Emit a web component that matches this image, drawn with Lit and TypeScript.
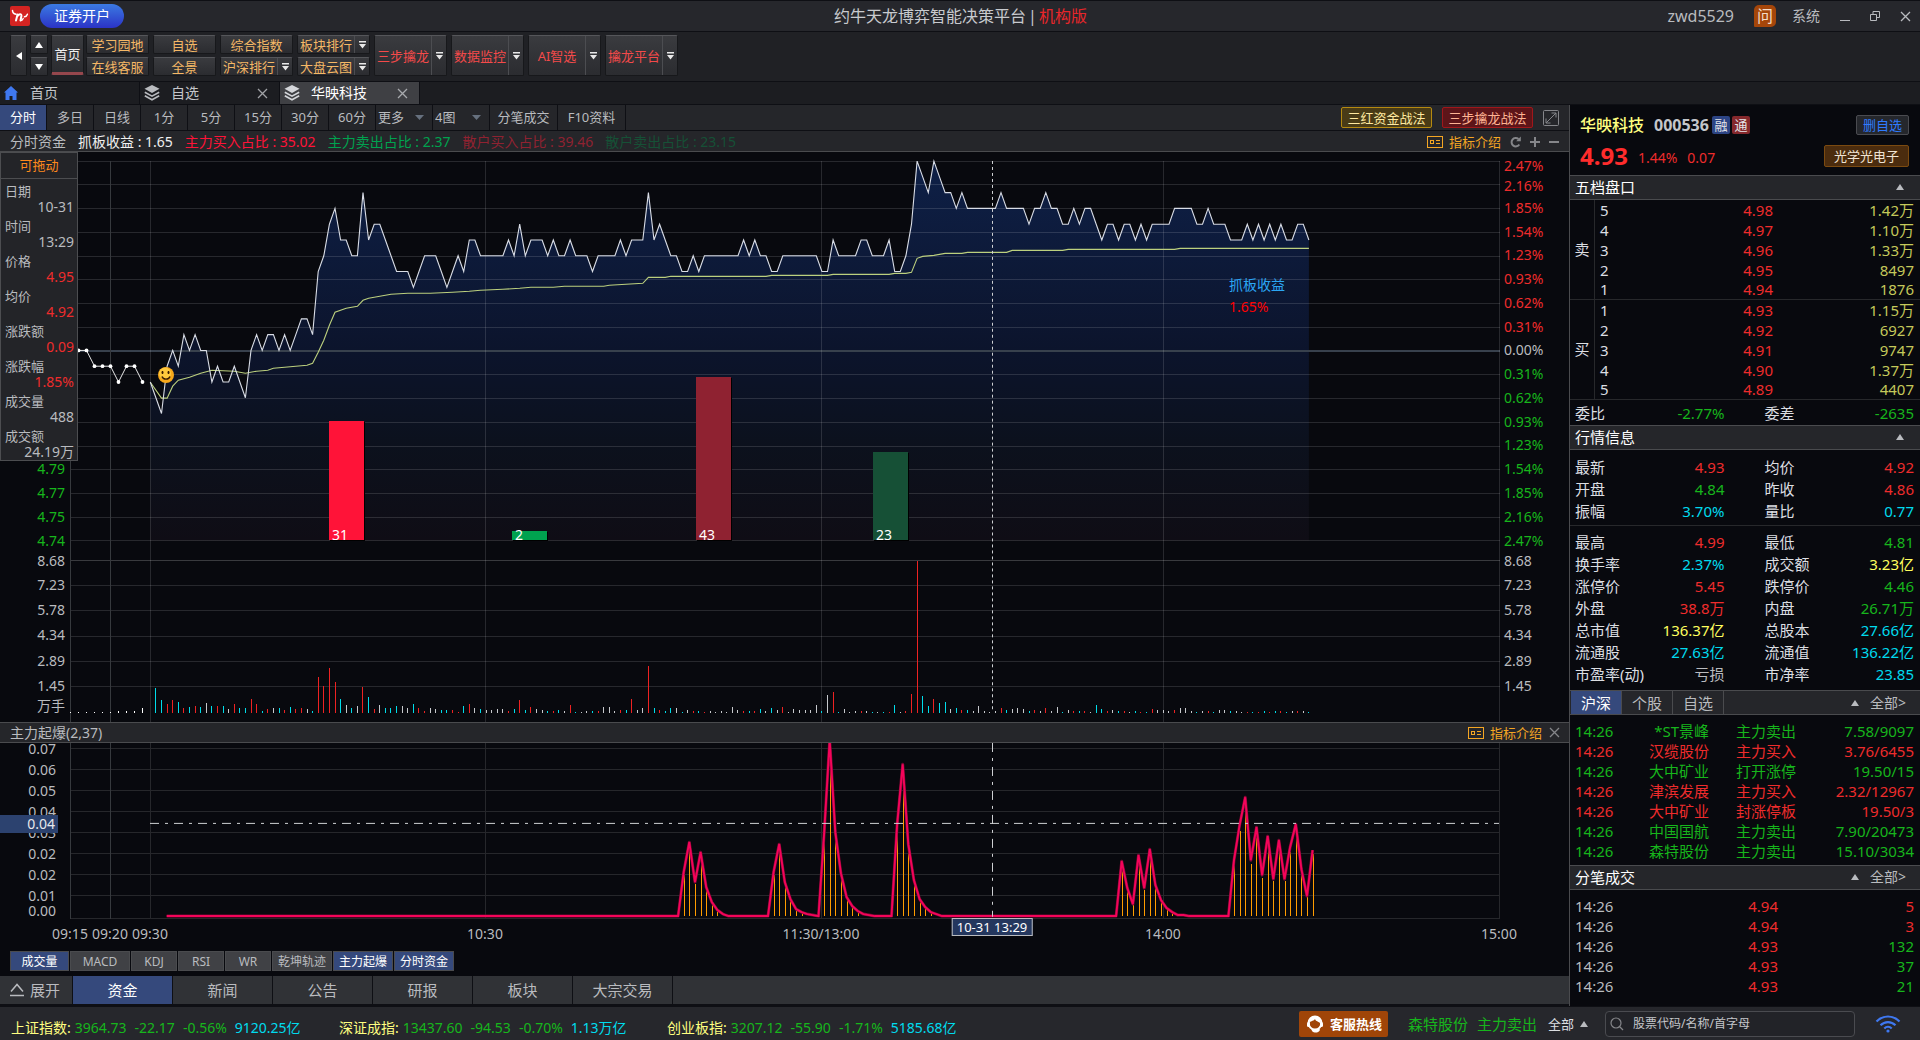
import { LitElement, html, svg, css } from "lit";
import { customElement } from "lit/decorators.js";
import { classMap } from "lit/directives/class-map.js";

/* ---------- shared ---------- */

const base = css`
  * { box-sizing: border-box; }
  button, select, input {
    font: inherit; color: inherit; background: none; border: 0; margin: 0; padding: 0; border-radius: 0;
  }
  button { cursor: pointer; white-space: nowrap; }
  a { color: inherit; text-decoration: none; }
  svg { display: block; flex: none; }
  table { border-collapse: separate; border-spacing: 0; width: 100%; table-layout: fixed; }
  td, th { padding: 0; font-weight: 400; white-space: nowrap; }
  .red { color: #ee2c2c; }
  .green { color: #17b51c; }
  .cyan { color: #00dbee; }
  .yellow { color: #ffff5e; }
  .gray { color: #b9bbbf; }
`;

const guideIcon = () => html`<svg width="16" height="12" viewBox="0 0 16 12" fill="none" stroke="#f5a623" shape-rendering="crispEdges">
  <rect x="0.5" y="0.5" width="15" height="11"/><rect x="3.5" y="4.5" width="3" height="3"/><path d="M9 4.5h4M9 7.5h4"/></svg>`;
const closeIcon = (c: string, s = 11) => html`<svg width=${s} height=${s} viewBox="0 0 11 11" fill="none" stroke=${c} stroke-width="1.3"><path d="M1 1l9 9M10 1l-9 9"/></svg>`;
const triUp = () => html`<svg width="8" height="6" viewBox="0 0 8 6" fill="#b9bbbf"><path d="M4 0l4 6H0z"/></svg>`;

/* ---------- chart data ---------- */

const X0 = 150.3;
const SLOT = 5.597;
const px = (slot: number) => X0 + slot * SLOT;

/* [minute slot, ticks above the previous close] */
const PRICE = `0:-2 2:-4 3:-1 4:0 5:-1 6:1 7:0 8:1 9:0 10:0 11:-2 12:-1 13:-2 14:-2 15:-1 17:-3 18:0 19:1 20:0 21:1 22:1 23:0
24:1 25:0 26:1 27:2 28:2 29:1 30:5 31:6 32:8 33:9 34:7 35:7 36:6 37:6 38:10 39:7 40:8 41:8 42:7 43:6 44:5 46:5 47:4 48:5 49:6 51:6
52:5 53:4 54:5 55:6 56:5 57:7 58:7 59:6 63:6 64:7 65:6 66:8 67:6 68:7 70:7 71:6 72:7 73:6 74:6 75:7 76:6 78:6 79:5 80:6 83:6 84:7
85:6 86:7 88:7 89:10 90:7 91:8 92:7 93:6 94:6 95:5 96:5 97:6 98:5 99:6 105:6 106:7 107:6 108:7 109:6 110:6 111:5 112:5 113:6 119:6
120:5 121:5 122:7 123:6 126:6 127:7 128:7 129:6 131:6 132:7 133:5 134:5 135:6 136:8 137:12 138:11 139:10 140:12 141:11 142:10
143:10 144:9 145:10 146:9 151:9 152:10 153:9 156:9 157:8 158:9 159:9 160:10 161:9 162:9 163:8 164:8 165:9 166:8 167:9 168:9 169:8
170:7 171:8 172:8 173:7 174:8 175:8 176:7 177:8 178:7 179:8 182:8 183:9 186:9 187:8 188:8 189:9 190:8 192:8 193:7 195:7 196:8
197:7 198:8 199:7 200:8 201:7 202:8 203:7 204:7 205:8 206:8 207:7`.split(/\s+/).map((p) => p.split(":").map(Number));

const AVERAGE = `0:382 2:398 3:398 4:386 5:380 7:377 9:373 11:370 15:371 17:373 19:371 21:370 22:368 24:367 26:366 28:365 29:363
30:352 31:340 32:325 33:312 35:308 37:306 38:300 39:298 41:296 43:294 46:293 50:293 54:292 57:291 59:290 63:289 66:288 68:287 72:287
74:286 81:286 82:285 85:284 88:283 89:277 92:277 93:276 110:276 111:275 121:275 122:274 132:274 133:273 135:273 136:272 137:258
138:256 140:255 142:253 145:253 146:252 153:252 154:250 163:250 164:249 183:249 184:248 207:248`.split(/\s+/).map((p) => p.split(":").map(Number));

/* per-minute volume: bar height and tone */
const VOLUME = `25C 13C 9R 13R 11C 5R 6C 7R 6C 10W 7C 7R 7C 4W 9R 5C 5C 14R 9R 2C 4R 5W 5C 3R 6C 4R 5R 4W 2C 36R 27R 45R 31R 14C 8W 5C
7W 26R 16C 4R 8W 5C 5C 7C 7W 5W 9C 5R 2R 5W 4W 3C 3C 3R 1R 7C 9R 5W 4C 3W 3W 4W 4W 2R 4C 13R 3C 6R 4W 3W 2C 2R 3C 2W 8R 1C 1W 2W 2C
2R 6W 6W 2W 3R 3C 14R 3W 5W 47R 5C 3R 2C 5C 5W 1C 3W 2R 2C 1R 2W 1W 2W 1W 6W 3W 2R 2C 2R 4C 2W 5C 3W 6R 1W 4W 3W 3W 3W 8W 2C 18W 21R
1C 4W 1W 2W 2R 2W 1C 1W 1C 1R 8C 1W 2R 19R 152R 17C 7C 14R 10C 11C 4W 5C 3R 3C 2W 7W 2W 1W 2W 5R 3C 4W 5W 4W 2C 3R 2W 5R 2W 6W 1C 3W
2R 2C 2R 1W 8C 4C 2R 3W 2C 2R 1W 2C 1R 1C 4R 3W 3W 2W 3R 5W 5W 2W 1C 2W 2R 1C 3W 3W 2C 2W 1W 1R 1C 1R 2C 1R 2C 2R 1C 2W 2R 2W 1C`.split(/\s+/);
const TONE: Record<string, string> = { R: "#ee2222", C: "#00dcea", W: "#c6c8cc" };

const BURST: [number, number[]][] = [
  [94, [0, 44, 74, 34, 64, 29, 14, 6, 2, 0]],
  [110, [0, 44, 72, 34, 17, 7, 4, 2, 1]],
  [119, [0, 82, 176, 84, 43, 19, 10, 5, 2, 1, 0]],
  [132, [0, 91, 152, 72, 36, 17, 9, 4, 2, 0]],
  [172, [0, 55, 28, 12, 61, 28, 67, 31, 16, 8, 4, 1, 1, 0]],
  [192, [0, 56, 91, 119, 56, 89, 41, 80, 37, 76, 37, 69, 92, 47, 20, 66]],
];

const H_LINES = [161, 184, 208, 232, 256, 279, 303, 327, 374, 398, 422, 446, 469, 493, 517, 541, 561, 586, 611, 637, 662, 687];
const SUB_LINES = [749, 770, 791, 812, 833, 854, 875, 896, 919];
const V_LINES = [150, 485, 821, 1163, 1499];

const PCT = ["2.47%", "2.16%", "1.85%", "1.54%", "1.23%", "0.93%", "0.62%", "0.31%", "0.00%", "0.31%", "0.62%", "0.93%", "1.23%", "1.54%", "1.85%", "2.16%", "2.47%"];
/* the cursor box stands in front of the upper thirteen levels */
const PRICES = [...Array(13).fill(""), "4.79", "4.77", "4.75", "4.74"];
const VOLS = ["8.68", "7.23", "5.78", "4.34", "2.89", "1.45"];
const SUBS = ["0.07", "0.06", "0.05", "0.04", "0.03", "0.02", "0.02", "0.01"];
const TIMES: [string, number][] = [["09:15", 70], ["09:20", 110], ["09:30", 150], ["10:30", 485], ["11:30/13:00", 821], ["14:00", 1163], ["15:00", 1499]];
const FUNDS: [string, number, number, string][] = [["31", 329, 421, "#ff1338"], ["2", 512, 532, "#00a24f"], ["43", 696, 377, "#8f2231"], ["23", 873, 452, "#165036"]];
const CURSOR: [string, string, string][] = [
  ["日期", "10-31", "gray"], ["时间", "13:29", "gray"], ["价格", "4.95", "red"], ["均价", "4.92", "red"],
  ["涨跌额", "0.09", "red"], ["涨跌幅", "1.85%", "red"], ["成交量", "488", "gray"], ["成交额", "24.19万", "gray"],
];

const leftPct = (x: number) => `left:${((x - 70) / 1430) * 100}%`;
const spot = (x: number, y: number) => `${leftPct(x)};top:${((y - 152) / 571) * 100}%`;

@customElement("market-chart")
export class MarketChart extends LitElement {
  static styles = [base, css`
    :host { flex: 1; display: flex; flex-direction: column; min-height: 0; font-size: 14px; line-height: 18px; }
    .panel { display: grid; grid-template-columns: 70px minmax(0, 1fr) 69px; grid-template-rows: minmax(0, 1fr); min-height: 0; position: relative; }
    .main { flex: 571 1 0; }
    .sub { flex: 176 1 0; }
    .plot { position: relative; min-height: 0; min-width: 0; }
    .plot svg.canvas { width: 100%; height: 100%; position: absolute; inset: 0; }
    .axis { display: grid; grid-template-rows: 4fr 20fr 20fr minmax(0, 357fr) 18fr 2fr minmax(0, 126fr) 16fr 8fr; min-height: 0; }
    .axis span { display: flex; align-items: center; min-height: 0; line-height: 16px; }
    .l span { justify-content: flex-end; padding-right: 5px; }
    .r span { padding-left: 4px; }
    .even { display: grid; grid-auto-rows: minmax(0, 1fr); min-height: 0; }
    .subaxis { display: grid; grid-template-rows: minmax(0, 163fr) minmax(0, 9fr) minmax(0, 4fr); color: #b9bbbf; position: relative; min-height: 0; }
    .subaxis .even { margin-top: -5px; }
    .subaxis span { display: flex; align-items: center; justify-content: flex-end; padding-right: 14px; line-height: 16px; min-height: 0; }
    .mark { position: absolute; left: 0; top: 41%; width: 58px; height: 18px; line-height: 18px; background: #2c426f; color: #e6e8ec; text-align: right; padding-right: 3px; }
    .tag { position: absolute; white-space: nowrap; color: #fff; line-height: 14px; }
    .gain { position: absolute; line-height: 22px; color: #2ba6f4; }
    .gain b { display: block; font-weight: 400; color: #ff0000; }
    .face { position: absolute; }
    .cursor { position: absolute; left: 0; top: 0; width: 78px; border: 1px solid #4c4d50; background: #232428; color: #b9bbbf; font-size: 14px; margin: 0; z-index: 2; padding-bottom: 1px; }
    .cursor h3 { margin: 0; font-weight: 400; font-size: 13px; line-height: 25px; text-align: center; color: #ff8a1c; border-bottom: 1px solid #4c4d50; }
    .cursor dl { margin: 0; padding: 5px 3px 0 4px; display: grid; gap: 5px; }
    .cursor dt, .cursor dd { margin: 0; line-height: 15px; }
    .cursor dt { font-size: 13px; }
    .cursor dd { text-align: right; }
    .bar { flex: none; height: 21px; display: flex; align-items: center; gap: 7px; padding: 0 9px 0 10px; background: #25262a; border-top: 1px solid #4a4b4e; border-bottom: 1px solid #4a4b4e; color: #b9bbbf; }
    .bar .guide { margin-left: auto; display: flex; align-items: center; gap: 6px; color: #f5a623; font-size: 13px; }
    .times { flex: none; height: 32px; display: grid; grid-template-columns: 70px minmax(0, 1fr) 69px; color: #b9bbbf; }
    .times div { grid-column: 2; position: relative; }
    .times span { position: absolute; top: 6px; transform: translateX(-50%); white-space: nowrap; }
    .times .now { top: -1px; border: 1px solid #b9bbbf; background: #24375e; color: #fff; padding: 0 4px; line-height: 16px; font-size: 13px; }
  `];

  private mainPlot() {
    const y = (k: number) => 350.7 - k * 15.8;
    const line = PRICE.map(([s, k]) => `${px(s).toFixed(1)},${y(k).toFixed(1)}`).join(" ");
    const avg = AVERAGE.map(([s, v]) => `${px(s).toFixed(1)},${v + 0.5}`).join(" ");
    const pre = [[70, -1], [78.5, 0], [86.5, 0], [94.5, -1], [102.5, -1], [110.5, -1], [118.5, -2], [126.5, -1], [134.5, -1], [142.5, -2]];
    const preVol = [1, 1, 1, 1, 1, 1, 2, 2, 2, 5];
    return svg`<svg class="canvas" viewBox="70 152 1430 571" preserveAspectRatio="none">
      <defs><linearGradient id="fill" gradientUnits="userSpaceOnUse" x1="0" y1="161" x2="0" y2="541">
        <stop offset="0" stop-color="#0e2047"/><stop offset="0.5" stop-color="#0c142c"/><stop offset="0.75" stop-color="#0c111d"/><stop offset="1" stop-color="#0f0d15"/></linearGradient></defs>
      <polygon points="${X0},541 ${line} ${px(207)},541" fill="url(#fill)"/>
      <g shape-rendering="crispEdges">
        ${H_LINES.map((v) => svg`<rect x="70" y=${v} width="1430" height="1" fill="#fff" fill-opacity=${v === 561 ? 0.2 : 0.13}/>`)}
        <rect x="70" y="350" width="1430" height="2" fill="#38414d"/>
        ${V_LINES.map((v) => svg`<rect x=${v} y="161" width="1" height="562" fill="#fff" fill-opacity="0.13"/>`)}
        <rect x="70" y="161" width="1" height="562" fill="#36393d"/>
        <rect x="110" y="161" width="1" height="562" fill="#36393d"/>
        ${preVol.map((h, i) => svg`<rect x=${70 + i * 8} y=${714 - h} width="1" height=${h} fill="#fff"/>`)}
        ${VOLUME.map((v, i) => {
          const h = parseInt(v, 10);
          return svg`<rect x=${Math.floor(px(i + 1))} y=${714 - h} width="1" height=${h} fill=${TONE[v.slice(-1)]}/>`;
        })}
      </g>
      <polyline points=${avg} fill="none" stroke="#bcd07e" stroke-width="1.1"/>
      <polyline points=${line} fill="none" stroke="#d9dde6" stroke-width="1.1"/>
      <polyline points=${pre.map(([x, k]) => `${x},${y(k)}`).join(" ")} fill="none" stroke="#e8e8e8"/>
      ${pre.map(([x, k]) => svg`<circle cx=${x} cy=${y(k)} r="1.9" fill="#fff"/>`)}
      <g shape-rendering="crispEdges">
        ${FUNDS.map(([, x, top, c]) => svg`<rect x=${x + 1} y=${top + 1} width="35" height=${541 - top} fill="#000"/><rect x=${x} y=${top} width="35" height=${541 - top} fill=${c}/>`)}
        <path d="M992.5 161V711" stroke="#cfd1d4" stroke-dasharray="3 3" fill="none"/>
      </g>
    </svg>`;
  }

  private subPlot() {
    const x = (j: number) => X0 + j * 5.615;
    const pts: string[] = ["166.7,917.3"];
    const sticks: [number, number][] = [];
    for (const [start, vals] of BURST) {
      vals.forEach((v, i) => {
        pts.push(`${x(start + i).toFixed(1)},${917.3 - v}`);
        if (v > 2) sticks.push([x(start + i), v]);
      });
    }
    return svg`<svg class="canvas" viewBox="70 744 1430 176" preserveAspectRatio="none">
      <g shape-rendering="crispEdges">
        ${SUB_LINES.map((v) => svg`<rect x="70" y=${v} width="1430" height="1" fill="#26272b"/>`)}
        ${V_LINES.map((v) => svg`<rect x=${v} y="744" width="1" height="176" fill="#26272b"/>`)}
        <rect x="70" y="744" width="1" height="176" fill="#36393d"/><rect x="110" y="744" width="1" height="176" fill="#36393d"/>
        ${sticks.map(([sx, v]) => svg`<rect x=${Math.round(sx)} y=${917 - v * 0.93} width="1" height=${v * 0.93} fill="#ff9c00"/>`)}
      </g>
      <polyline points=${pts.join(" ")} fill="none" stroke="#7d0833" stroke-width="3" stroke-linejoin="round"/>
      <polyline points=${pts.join(" ")} fill="none" stroke="#f4045a" stroke-width="1.9" stroke-linejoin="miter"/>
      <g shape-rendering="crispEdges" stroke="#cfd1d4" stroke-dasharray="9 6 3 6" fill="none">
        <path d="M992.5 744V918"/><path d="M150 824.5H1499"/>
      </g>
    </svg>`;
  }

  private axis(side: string, labels: string[]) {
    const tone = (i: number) => (i < 8 ? "red" : i === 8 ? "gray" : "green");
    return html`<div class="axis ${side}">
      <i></i><span class="red">${labels[0]}</span><span class="red">${labels[1]}</span>
      <div class="even">${labels.slice(2).map((t, i) => html`<span class=${tone(i + 2)}>${t}</span>`)}</div>
      <span class="gray">${VOLS[0]}</span><i></i>
      <div class="even">${VOLS.slice(1).map((t) => html`<span class="gray">${t}</span>`)}</div>
      ${side === "l" ? html`<span class="gray">万手</span>` : ""}
    </div>`;
  }

  render() {
    return html`
      <section class="panel main">
        ${this.axis("l", PRICES)}
        <div class="plot">
          ${this.mainPlot()}
          ${FUNDS.map(([t, x]) => html`<span class="tag" style=${spot(x + 3, 529)}>${t}</span>`)}
          <div class="gain" style=${spot(1229, 274)}>抓板收益<b>1.65%</b></div>
          <svg class="face" style=${spot(158, 367)} width="16" height="16" viewBox="0 0 16 16">
            <circle cx="8" cy="8" r="8" fill="#f7a81b"/><circle cx="7" cy="6.5" r="6" fill="#ffc93d"/>
            <path d="M4.5 4v3M3.5 5.500h2M10.500 4v3M9.500 5.500h2" stroke="#3a1c00" stroke-width="1.300" fill="none"/>
            <path d="M4 9.500c1 3.500 7 3.500 8 0" stroke="#3a1c00" stroke-width="1.400" fill="none"/></svg>
        </div>
        ${this.axis("r", PCT)}
        <aside class="cursor"><h3>可拖动</h3>
          <dl>${CURSOR.map(([k, v, c]) => html`<div><dt>${k}</dt><dd class=${c}>${v}</dd></div>`)}</dl>
        </aside>
      </section>
      <div class="bar">主力起爆(2,37)<a class="guide" href="#">${guideIcon()}指标介绍</a><button aria-label="关闭">${closeIcon("#85868a")}</button></div>
      <section class="panel sub">
        <div class="subaxis">
          <div class="even">${SUBS.map((t) => html`<span>${t}</span>`)}</div><span>0.00</span>
          <div class="mark">0.04</div>
        </div>
        <div class="plot">${this.subPlot()}</div>
      </section>
      <div class="times"><div>
        ${TIMES.map(([t, x]) => html`<span style=${leftPct(x)}>${t}</span>`)}
        <span class="now" style=${leftPct(992)}>10-31 13:29</span>
      </div></div>`;
  }
}

/* ---------- quote panel ---------- */

const SELL = [["5", "4.98", "1.42万"], ["4", "4.97", "1.10万"], ["3", "4.96", "1.33万"], ["2", "4.95", "8497"], ["1", "4.94", "1876"]];
const BUY = [["1", "4.93", "1.15万"], ["2", "4.92", "6927"], ["3", "4.91", "9747"], ["4", "4.90", "1.37万"], ["5", "4.89", "4407"]];
const INFO_A = [["最新", "4.93", "red"], ["均价", "4.92", "red"], ["开盘", "4.84", "green"], ["昨收", "4.86", "red"], ["振幅", "3.70%", "cyan"], ["量比", "0.77", "cyan"]];
const INFO_B = [
  ["最高", "4.99", "red"], ["最低", "4.81", "green"], ["换手率", "2.37%", "cyan"], ["成交额", "3.23亿", "yellow"],
  ["涨停价", "5.45", "red"], ["跌停价", "4.46", "green"], ["外盘", "38.8万", "red"], ["内盘", "26.71万", "green"],
  ["总市值", "136.37亿", "yellow"], ["总股本", "27.66亿", "cyan"], ["流通股", "27.63亿", "cyan"], ["流通值", "136.22亿", "cyan"],
  ["市盈率(动)", "亏损", "gray"], ["市净率", "23.85", "cyan"],
];
const FEED = [
  ["*ST景峰", "主力卖出", "7.58/9097", "green"], ["汉缆股份", "主力买入", "3.76/6455", "red"], ["大中矿业", "打开涨停", "19.50/15", "green"],
  ["津滨发展", "主力买入", "2.32/12967", "red"], ["大中矿业", "封涨停板", "19.50/3", "red"], ["中国国航", "主力卖出", "7.90/20473", "green"],
  ["森特股份", "主力卖出", "15.10/3034", "green"],
];
const TICKS = [["4.94", "5", "red"], ["4.94", "3", "red"], ["4.93", "132", "green"], ["4.93", "37", "green"], ["4.93", "21", "green"]];

@customElement("quote-panel")
export class QuotePanel extends LitElement {
  static styles = [base, css`
    :host { display: block; width: 351px; flex: none; border-left: 1px solid #4a4b4e; font-size: 15px; line-height: 20px; color: #dcdee2; background: #08090e; }
    .head { height: 70px; padding: 10px 11px 0 10px; }
    .line { display: flex; align-items: center; }
    .name { font-size: 16px; font-weight: 500; color: #ffff80; margin: 0 10px 0 0; }
    .code { font-size: 16px; font-weight: 700; color: #c4c6ca; margin-right: 3px; }
    .badge { width: 18px; height: 18px; line-height: 18px; font-size: 13px; text-align: center; border-radius: 2px; background: #2c4484; margin-right: 2px; color: #e4e6ea; }
    .badge.pass { background: #85282c; }
    .del { margin-left: auto; width: 53px; height: 20px; line-height: 18px; border: 1px solid #4a4b50; border-radius: 2px; background: #25272c; color: #2f7bff; font-size: 13px; }
    .second { margin-top: 9px; }
    .last { font-size: 24px; line-height: 24px; font-weight: 700; margin-right: 10px; color: #ff2c2c; }
    .chg { font-size: 14px; margin-right: 10px; padding-top: 4px; }
    .sector { margin-left: auto; width: 85px; height: 22px; line-height: 20px; border: 1px solid #7b4a10; border-radius: 2px; background: #4b2c0e; color: #f0e4d4; font-size: 13px; }
    .title { height: 25px; display: flex; align-items: center; margin: 0; padding: 0 14px 2px 5px; background: #25262a; border-top: 1px solid #4a4b4e; border-bottom: 1px solid #4a4b4e; font-size: 15px; font-weight: 400; color: #fff; }
    .title .fold { margin-left: auto; margin-right: 2px; }
    .title .all { margin-left: 9px; color: #b9bbbf; font-size: 14px; }
    .book tr { height: 20px; line-height: 19px; }
    .book tr:last-child td, .book .side { border-bottom: 1px solid #27282b; }
    .book .side { width: 25px; border-right: 1px solid #27282b; text-align: center; }
    .book .lv { width: 40px; padding-left: 5px; text-align: left; }
    .book .pr { text-align: right; }
    .book .vo { width: 147px; text-align: right; padding-right: 6px; color: #c4c85a; }
    .diff { height: 25px; align-content: center; }
    dl { margin: 0; display: grid; grid-template-columns: 1fr 1fr; column-gap: 40px; padding: 0 6px 0 5px; }
    dl div { display: flex; justify-content: space-between; line-height: 22px; white-space: nowrap; }
    dt, dd { margin: 0; height: 22px; }
    .a { padding-top: 6px; padding-bottom: 3px; border-bottom: 1px solid #27282b; }
    .b { padding-top: 5px; padding-bottom: 5px; }
    .tabs { padding: 0 14px 0 1px; }
    .tabs .tab { width: 51px; height: 23px; border-right: 1px solid #4a4b4e; color: #b9bbbf; }
    .tabs .on { background: #35497c; color: #fff; }
    .feed { margin: 6px 0 4px; }
    .feed tr, .ticks tr { height: 20px; line-height: 19px; }
    .feed .t, .ticks .t { width: 60px; padding-left: 5px; text-align: left; }
    .feed .n { width: 79px; text-align: right; }
    .feed .k { width: 90px; padding-left: 27px; text-align: left; }
    .feed .p, .ticks .q { text-align: right; padding-right: 6px; }
    .ticks { margin-top: 6px; }
    .ticks .p { width: 148px; text-align: right; }
  `];

  private side(name: string, rows: string[][]) {
    return html`<tbody>${rows.map((r, i) => html`<tr>
      ${i === 0 ? html`<th class="side" rowspan="5">${name}</th>` : ""}
      <td class="lv">${r[0]}</td><td class="pr red">${r[1]}</td><td class="vo">${r[2]}</td></tr>`)}</tbody>`;
  }
  private pairs(cls: string, rows: string[][]) {
    return html`<dl class=${cls}>${rows.map(([k, v, c]) => html`<div><dt>${k}</dt><dd class=${c}>${v}</dd></div>`)}</dl>`;
  }

  render() {
    return html`
      <header class="head">
        <div class="line"><h1 class="name">华映科技</h1><span class="code">000536</span><span class="badge">融</span><span class="badge pass">通</span><button class="del">删自选</button></div>
        <div class="line second"><span class="last">4.93</span><span class="chg red">1.44%</span><span class="chg red">0.07</span><button class="sector">光学光电子</button></div>
      </header>
      <h2 class="title">五档盘口<button class="fold" aria-label="收起">${triUp()}</button></h2>
      <table class="book">${this.side("卖", SELL)}${this.side("买", BUY)}</table>
      ${this.pairs("diff", [["委比", "-2.77%", "green"], ["委差", "-2635", "green"]])}
      <h2 class="title">行情信息<button class="fold" aria-label="收起">${triUp()}</button></h2>
      ${this.pairs("a", INFO_A)}${this.pairs("b", INFO_B)}
      <div class="title tabs"><button class="tab on">沪深</button><button class="tab">个股</button><button class="tab">自选</button>
        <button class="fold" aria-label="收起">${triUp()}</button><a class="all" href="#">全部&gt;</a></div>
      <table class="feed"><tbody>${FEED.map(([n, k, p, c]) => html`<tr class=${c}><td class="t">14:26</td><td class="n">${n}</td><td class="k">${k}</td><td class="p">${p}</td></tr>`)}</tbody></table>
      <h2 class="title">分笔成交<button class="fold" aria-label="收起">${triUp()}</button><a class="all" href="#">全部&gt;</a></h2>
      <table class="ticks"><tbody>${TICKS.map(([p, q, c]) => html`<tr><td class="t gray">14:26</td><td class="p red">${p}</td><td class="q ${c}">${q}</td></tr>`)}</tbody></table>`;
  }
}

/* ---------- shell ---------- */

const PERIODS = ["分时", "多日", "日线", "1分", "5分", "15分", "30分", "60分"];
const RATIOS = [["抓板收益 : 1.65", "c0"], ["主力买入占比 : 35.02", "c1"], ["主力卖出占比 : 2.37", "c2"], ["散户买入占比 : 39.46", "c3"], ["散户卖出占比 : 23.15", "c4"]];
const INDICATORS = ["成交量", "MACD", "KDJ", "RSI", "WR", "乾坤轨迹", "主力起爆", "分时资金"];
const SECTIONS = ["资金", "新闻", "公告", "研报", "板块", "大宗交易"];
const INDEXES = [
  ["上证指数:", "3964.73", "-22.17", "-0.56%", "9120.25亿"],
  ["深证成指:", "13437.60", "-94.53", "-0.70%", "1.13万亿"],
  ["创业板指:", "3207.12", "-55.90", "-1.71%", "5185.68亿"],
];

const dropMark = () => html`<svg width="7" height="8" viewBox="0 0 7 8" fill="#e8e8e8"><path d="M0 0h7v1.500H0zM0 3h7L3.500 7.500z"/></svg>`;
const stack = (c: string) => html`<svg width="16" height="16" viewBox="0 0 16 16"><path fill=${c} d="M8 0l7.500 3.800L8 8 .5 3.800z"/><path fill="none" stroke=${c} stroke-width="1.600" d="M.8 7.300L8 11.200l7.200-3.900M.8 10.800L8 14.800l7.200-4"/></svg>`;

@customElement("app-root")
export class AppRoot extends LitElement {
  static styles = [base, css`
    :host { display: flex; flex-direction: column; min-height: 100vh; background: #08090e; color: #b9bbbf; font: 14px/20px "Noto Sans", "Noto Sans CJK SC", sans-serif; }
    .top { height: 32px; display: grid; grid-template-columns: 1fr auto 1fr; align-items: center; padding: 0 9px 0 10px; background: #26272c; border-top: 1px solid #0e0f14; border-bottom: 1px solid #0e0f14; }
    .brand, .user { display: flex; align-items: center; }
    .open { margin-left: 10px; width: 84px; height: 24px; border-radius: 12px; background: linear-gradient(#3b7ae2, #2b33c6); color: #fff; line-height: 22px; }
    .product { font-size: 16px; margin: 0; font-weight: 400; color: #c8cace; display: flex; gap: 2px; }
    .product b { font-weight: 400; color: #e8262a; }
    .user { justify-content: flex-end; font-size: 16px; }
    .ask { width: 22px; height: 22px; line-height: 21px; font-size: 16px; border-radius: 5px 5px 5px 1px; background: #a5460a; color: #f4dcc8; margin: 0 16px 0 20px; text-align: center; }
    .sys { font-size: 14px; margin-right: 20px; }
    .win { margin-left: 20px; }

    .tools { height: 50px; display: flex; gap: 4px; padding: 3px 10px 5px; background: #202125; border-bottom: 1px solid #0e0f14; font-size: 13px; line-height: 16px; }
    .key { background: linear-gradient(#3a3b3f, #2b2c30); border: 1px solid #17181b; border-top-color: #55565a; border-radius: 2px; display: flex; align-items: center; justify-content: center; color: #f5b866; height: 19px; flex: 1; }
    .col { display: flex; flex-direction: column; gap: 3px; width: 73px; }
    .slim { width: 63px; }
    .back { width: 17px; flex: none; height: auto; }
    .nudge { width: 18px; margin-right: -1px; margin-left: -1px; }
    .homekey { width: 33px; flex: none; height: 40px; color: #f0f0f0; border-bottom: 3px solid #95474d; margin-right: -2px; }
    .split { justify-content: flex-start; }
    .split .word { flex: 1; text-align: center; }
    .split .arrow { width: 15px; align-self: stretch; display: flex; align-items: center; justify-content: center; border-left: 1px solid #4c4d51; }
    .big { width: 73px; flex: none; height: auto; color: #f44a4a; }

    .tabs { height: 23px; display: flex; background: #1c1d21; border-bottom: 1px solid #0e0f14; color: #c4c6ca; }
    .tab { width: 140px; display: flex; align-items: center; padding: 0 11px 0 4px; border-right: 1px solid #0e0f14; line-height: 22px; }
    .tab .word { margin-left: 12px; flex: 1; text-align: left; }
    .tab .stk { margin-left: 11px; }
    .tab.on { background: #3f4044; color: #fff; }

    .body { flex: 1; display: flex; min-height: 0; }
    .left { flex: 1; min-width: 0; display: flex; flex-direction: column; }
    .periods { flex: none; height: 26px; display: flex; align-items: stretch; background: #25262a; border-bottom: 1px solid #0e0f14; font-size: 13px; }
    .per, .wide { padding-bottom: 2px; }
    .per { width: 47px; border-right: 1px solid #0e0f14; }
    .per.on { background: #35497c; color: #fff; }
    .pick { position: relative; display: flex; align-items: center; width: 57px; border-right: 1px solid #0e0f14; }
    .pick select { appearance: none; width: 100%; padding: 0 0 2px 2px; outline: 0; }
    .pick svg { position: absolute; right: 8px; pointer-events: none; }
    .wide { width: 68px; border-right: 1px solid #0e0f14; }
    .periods .ways { margin-left: auto; display: flex; align-items: center; gap: 10px; padding-right: 10px; }
    .way { width: 91px; height: 21px; line-height: 18px; border: 1px solid #b58a10; border-radius: 2px; background: #493b16; color: #ffe9a0; }
    .way.hot { border-color: #a0171b; background: #5d1519; color: #ffb494; }
    .ratios { flex: none; height: 21px; display: flex; align-items: center; gap: 12px; padding: 1px 10px 0; background: #25262a; border-bottom: 1px solid #4a4b4e; }
    .ratios .c0 { color: #f0f0f0; } .ratios .c1 { color: #ff1338; } .ratios .c2 { color: #00a24f; } .ratios .c3 { color: #8f2231; } .ratios .c4 { color: #165036; }
    .ratios .acts { margin-left: auto; display: flex; align-items: center; gap: 9px; }
    .guide { display: flex; align-items: center; gap: 6px; color: #f5a623; font-size: 13px; }

    .inds { flex: none; height: 25px; display: flex; gap: 1px; padding: 0 10px 5px; font-size: 12px; }
    .inds button { width: 60px; background: #404145; border: 1px solid #4a4b4e; height: 20px; line-height: 17px; }
    .inds button.s { width: 46px; }
    .inds button.m { width: 59px; }
    .inds button.on { background: #35497c; color: #fff; }
    .sects { flex: none; height: 30px; display: flex; background: #303236; border-bottom: 2px solid #0e0f14; font-size: 15px; }
    .sects button { width: 100px; border-right: 1px solid #0e0f14; }
    .sects .grow { width: 73px; display: flex; align-items: center; justify-content: center; gap: 6px; padding-right: 2px; }
    .sects button.on { background: #35497c; color: #fff; }

    .status { flex: none; height: 34px; display: flex; align-items: center; padding: 0 19px 0 11px; background: #26272c; border-top: 1px solid #0e0f14; }
    .idx { display: flex; width: 328px; gap: 8px; white-space: nowrap; padding-top: 8px; }
    .idx .nm { color: #ffff80; margin-right: -4px; }
    .feedback { margin-left: auto; width: 89px; height: 26px; background: #a04508; color: #fff; font-size: 13px; font-weight: 600; display: flex; align-items: center; gap: 6px; padding-left: 7px; border-radius: 2px; margin-right: 20px; }
    .latest { font-size: 15px; color: #17b51c; display: flex; gap: 9px; margin-right: 11px; }
    .more { display: flex; align-items: center; gap: 6px; margin-right: 17px; color: #dcdee2; font-size: 13px; }
    .find { width: 250px; height: 26px; border: 1px solid #4a4b50; border-radius: 4px; display: flex; align-items: center; gap: 9px; padding-left: 4px; margin-right: 20px; background: #222328; }
    .find input { flex: 1; min-width: 0; outline: 0; font-size: 12px; color: #c4c6ca; }
    .find input::placeholder { color: #c4c6ca; opacity: 1; }
  `];

  private split(t: string) {
    return html`<button class="key split"><span class="word">${t}</span><span class="arrow">${dropMark()}</span></button>`;
  }
  private picker(label: string) {
    return html`<label class="pick"><select aria-label=${label}><option>${label}</option></select>
      <svg width="9" height="5" viewBox="0 0 9 5" fill="#66707e"><path d="M0 0h9L4.500 5z"/></svg></label>`;
  }

  render() {
    return html`
      <header class="top">
        <div class="brand">
          <svg width="20" height="20" viewBox="0 0 20 20" fill="none" stroke="#fff" stroke-linecap="round" stroke-linejoin="round"><rect width="20" height="20" rx="2" fill="#d42422" stroke="none"/>
            <path d="M2.500 4.500c0 2.200 1 3.200 3.500 3.800" stroke-width="1.500"/><path d="M7.500 8.500L6 14.500M7.200 10.500c1.500-2.600 4.600-3.200 4.200-.5l-.9 4.500" stroke-width="2"/><path d="M10.500 14.500c1.600.2 2.300-.6 2.800-2.200" stroke-width="1.200"/><path d="M14.500 10.800c1.500-.3 2.400-1 2.900-2.600" stroke-width="1.500"/></svg>
          <button class="open">证券开户</button>
        </div>
        <p class="product"><span>约牛天龙博弈智能决策平台</span><span>|</span><b>机构版</b></p>
        <div class="user"><span>zwd5529</span><button class="ask">问</button><button class="sys">系统</button>
          <button aria-label="最小化"><svg width="10" height="12" viewBox="0 0 10 12"><path d="M0 10.500h10" stroke="#b9bbbf"/></svg></button>
          <button class="win" aria-label="还原"><svg width="10" height="10" viewBox="0 0 10 10" fill="none" stroke="#b9bbbf"><path d="M.5 3.500h6v6h-6zM3 3V.5h6.500v6H7"/></svg></button>
          <button class="win" aria-label="关闭">${closeIcon("#b9bbbf")}</button>
        </div>
      </header>

      <nav class="tools">
        <button class="key back" aria-label="后退"><svg width="6" height="8" viewBox="0 0 6 8" fill="#fff"><path d="M6 0v8L0 4z"/></svg></button>
        <div class="col nudge">
          <button class="key" aria-label="上移"><svg width="8" height="6" viewBox="0 0 8 6" fill="#fff"><path d="M4 0l4 6H0z"/></svg></button>
          <button class="key" aria-label="下移"><svg width="8" height="6" viewBox="0 0 8 6" fill="#fff"><path d="M4 6l4-6H0z"/></svg></button>
        </div>
        <button class="key homekey">首页</button>
        <div class="col slim"><button class="key">学习园地</button><button class="key">在线客服</button></div>
        <div class="col slim"><button class="key">自选</button><button class="key">全景</button></div>
        <div class="col"><button class="key">综合指数</button>${this.split("沪深排行")}</div>
        <div class="col">${this.split("板块排行")}${this.split("大盘云图")}</div>
        ${["三步擒龙", "数据监控", "AI智选", "擒龙平台"].map((t) => html`<button class="key split big"><span class="word">${t}</span><span class="arrow">${dropMark()}</span></button>`)}
      </nav>

      <nav class="tabs">
        <a class="tab" href="#"><svg width="14" height="14" viewBox="0 0 14 14" fill="#3f78f0"><path d="M7 0l7 6.500h-1.500V14H8.500v-4h-3v4h-4V6.500H0z"/></svg><span class="word">首页</span></a>
        <div class="tab">${stack("#b9bbbf")}<span class="word stk">自选</span><button aria-label="关闭">${closeIcon("#a0a2a6")}</button></div>
        <div class="tab on">${stack("#d4d6da")}<span class="word stk">华映科技</span><button aria-label="关闭">${closeIcon("#a8aaae")}</button></div>
      </nav>

      <main class="body">
        <div class="left">
          <div class="periods">
            ${PERIODS.map((t, i) => html`<button class=${classMap({ per: true, on: i === 0 })}>${t}</button>`)}
            ${this.picker("更多")}${this.picker("4图")}
            <button class="wide">分笔成交</button><button class="wide">F10资料</button>
            <div class="ways"><button class="way">三红资金战法</button><button class="way hot">三步擒龙战法</button>
              <button aria-label="全屏"><svg width="16" height="16" viewBox="0 0 16 16" fill="none" stroke="#85868a"><rect x=".5" y=".5" width="15" height="15" rx="1"/><path d="M3 13l10-10M8.500 3H13v4.500M3 8.500V13h4.500"/></svg></button></div>
          </div>
          <div class="ratios"><span>分时资金</span>${RATIOS.map(([t, c]) => html`<span class=${c}>${t}</span>`)}
            <div class="acts"><a class="guide" href="#">${guideIcon()}指标介绍</a>
              <button aria-label="刷新"><svg width="11" height="12" viewBox="0 0 11 12" fill="none" stroke="#85868a" stroke-width="2"><path d="M9.300 8.500A4.200 4.200 0 1 1 8.500 3"/><path d="M10.800.5v4.700H6.200z" fill="#85868a" stroke="none"/></svg></button>
              <button aria-label="放大"><svg width="10" height="10" viewBox="0 0 10 10" stroke="#85868a" stroke-width="2"><path d="M0 5h10M5 0v10"/></svg></button>
              <button aria-label="缩小"><svg width="10" height="10" viewBox="0 0 10 10" stroke="#85868a" stroke-width="2"><path d="M0 5h10"/></svg></button></div>
          </div>
          <market-chart></market-chart>
          <div class="inds">${INDICATORS.map((t, i) => html`<button class=${classMap({ on: i === 0 || i > 5, s: i > 1 && i < 5, m: i === 0 })}>${t}</button>`)}</div>
          <div class="sects"><button class="grow"><svg width="14" height="14" viewBox="0 0 14 14" fill="none" stroke="#b9bbbf" stroke-width="1.500"><path d="M1 8.500l6-7 6 7M0 12.500h14"/></svg>展开</button>
            ${SECTIONS.map((t, i) => html`<button class=${classMap({ on: i === 0 })}>${t}</button>`)}</div>
        </div>
        <quote-panel></quote-panel>
      </main>

      <footer class="status">
        ${INDEXES.map(([n, a, b, c, d]) => html`<div class="idx"><span class="nm">${n}</span><span class="green">${a}</span><span class="green">${b}</span><span class="green">${c}</span><span class="cyan">${d}</span></div>`)}
        <button class="feedback"><svg width="18" height="18" viewBox="0 0 18 18"><circle cx="9" cy="8" r="6.500" fill="none" stroke="#fff" stroke-width="2"/><path d="M3 9c1-4 4-2 6-5 1 3 4 2 6 5 0-6-3-8-6-8S3 3 3 9z" fill="#fff"/><rect x="1" y="7" width="3" height="5" rx="1.500" fill="#fff"/><rect x="14" y="7" width="3" height="5" rx="1.500" fill="#fff"/><path d="M5 13c2.500 2 5.500 2 8 0l1 2c-2 3.500-6 3-8 1z" fill="#fff"/></svg>客服热线</button>
        <div class="latest"><span>森特股份</span><span>主力卖出</span></div>
        <button class="more">全部 ${triUp()}</button>
        <label class="find"><svg width="14" height="14" viewBox="0 0 14 14" fill="none" stroke="#85868a" stroke-width="1.200"><circle cx="6" cy="6" r="5"/><path d="M9.500 9.500l3.500 3.500"/></svg><input type="text" aria-label="股票搜索" placeholder="股票代码/名称/首字母"></label>
        <svg width="26" height="18" viewBox="0 0 26 18" fill="none" stroke="#3f78f0" stroke-width="2.200"><path d="M1.500 6.500C8-.2 18-.2 24.500 6.500M5.500 10.300c4.300-4.300 10.700-4.300 15 0M9.300 13.500c2.200-2.200 5.200-2.200 7.400 0"/><circle cx="13" cy="16" r="1.600" fill="#3f78f0" stroke="none"/></svg>
      </footer>`;
  }
}
